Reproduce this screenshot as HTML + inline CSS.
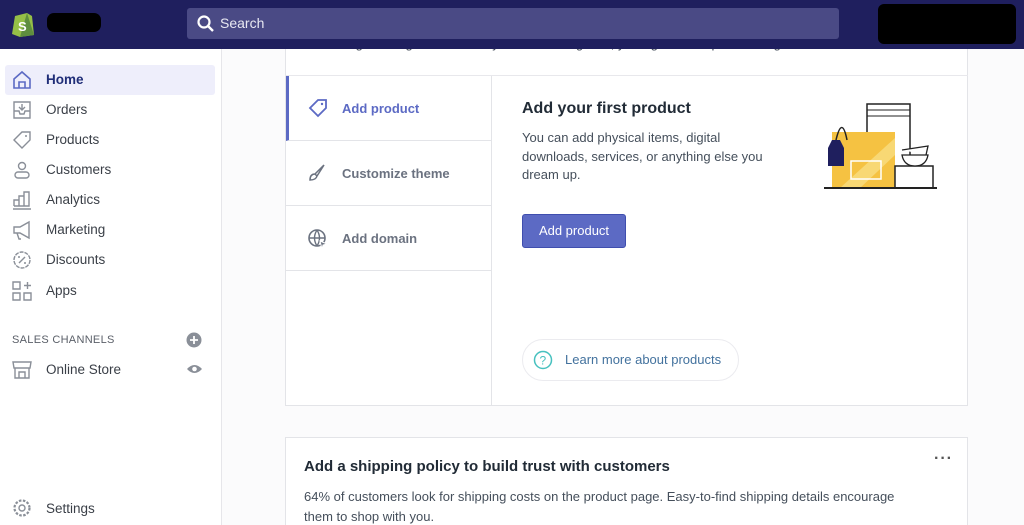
<!DOCTYPE html>
<html><head><style>
*{box-sizing:border-box;margin:0;padding:0}
html,body{width:1024px;height:525px;overflow:hidden}
body{font-family:"Liberation Sans",sans-serif;background:#fbfbfc;position:relative;color:#212b36}
.top{position:absolute;left:0;top:0;width:1024px;height:49px;background:#1f1f5e;z-index:5}
.search{position:absolute;left:187px;top:8px;width:652px;height:31px;background:#4a4a85;border-radius:3px;color:#e8e8f2;font-size:14px;line-height:31px;padding-left:54px}
.side{position:absolute;left:0;top:49px;width:222px;height:476px;background:#fff;border-right:1px solid #e6e6ea}
.item{position:absolute;left:46px;font-size:13.5px;color:#3a3f47}
.ic{position:absolute;left:11px;width:22px;height:22px}
.card{position:absolute;background:#fff;border:1px solid #e3e4e8}
.tab{position:absolute;left:286px;width:206px;height:65px;border-bottom:1px solid #e3e4e8;font-size:13px;font-weight:bold;color:#6b7280;padding-left:56px;line-height:65px}
</style></head><body>
<div class="top">
<svg style="position:absolute;left:11px;top:10px" width="24" height="27" viewBox="0 0 24 27"><path d="M4 6 L16 3 L21 6 L23 25 L9 27 L1 24 Z" fill="#95bf47"/><path d="M16 3 L23 25 L9 27 Z" fill="#5e8e3e"/><text x="7" y="21" font-size="13" font-weight="bold" fill="#fff" font-family="Liberation Sans">S</text></svg>
<div style="position:absolute;left:47px;top:13px;width:54px;height:19px;background:#000;border-radius:7px"></div>
<div class="search"><svg style="position:absolute;left:10px;top:7px" width="18" height="18" viewBox="0 0 18 18"><circle cx="7" cy="7" r="5.5" stroke="#fff" stroke-width="2.2" fill="none"/><path d="M11 11 L16 16" stroke="#fff" stroke-width="2.4"/></svg><span style="position:absolute;left:33px">Search</span></div>
<div style="position:absolute;left:878px;top:4px;width:138px;height:40px;background:#000;border-radius:6px"></div>
</div>
<div class="side">
<div style="position:absolute;left:5px;top:16px;width:210px;height:30px;background:#eeeefb;border-radius:3px"></div>
<svg class="ic" style="top:20px" viewBox="0 0 22 22"><path d="M3 10 L11 3 L19 10 V19 H3 Z M8 19 V13 H14 V19" stroke="#5c6ac4" stroke-width="1.6" fill="none"/></svg>
<div class="item" style="top:23px;color:#202e78;font-weight:bold">Home</div>
<svg class="ic" style="top:50px" viewBox="0 0 22 22"><path d="M3 3 H19 V19 H3 Z M3 12 H8 L9 15 H13 L14 12 H19 M11 5 V11 M8 8 L11 11 L14 8" stroke="#8a8f98" stroke-width="1.4" fill="none"/></svg>
<div class="item" style="top:53px">Orders</div>
<svg class="ic" style="top:80px" viewBox="0 0 22 22"><path d="M3 11 L11 3 H19 V11 L11 19 Z" stroke="#8a8f98" stroke-width="1.4" fill="none"/><circle cx="15" cy="7" r="1" fill="#8a8f98"/></svg>
<div class="item" style="top:83px">Products</div>
<svg class="ic" style="top:110px" viewBox="0 0 22 22"><circle cx="11" cy="7" r="3.5" stroke="#8a8f98" stroke-width="1.4" fill="none"/><rect x="4" y="13" width="14" height="6" rx="3" stroke="#8a8f98" stroke-width="1.4" fill="none"/></svg>
<div class="item" style="top:113px">Customers</div>
<svg class="ic" style="top:140px" viewBox="0 0 22 22"><path d="M2 20 H20 M3 17 V11 H8 V17 M8 17 V7 H13 V17 M13 17 V3 H18 V17 H3" stroke="#8a8f98" stroke-width="1.4" fill="none"/></svg>
<div class="item" style="top:143px">Analytics</div>
<svg class="ic" style="top:170px" viewBox="0 0 22 22"><path d="M3 8 H9 L18 3 V19 L9 14 H3 Z M6 14 L8 20 H10" stroke="#8a8f98" stroke-width="1.4" fill="none"/></svg>
<div class="item" style="top:173px">Marketing</div>
<svg class="ic" style="top:200px" viewBox="0 0 22 22"><circle cx="11" cy="11" r="8" stroke="#8a8f98" stroke-width="1.4" fill="none" stroke-dasharray="4 1"/><path d="M8 14 L14 8" stroke="#8a8f98" stroke-width="1.4"/><circle cx="8" cy="8" r="1" fill="#8a8f98"/><circle cx="14" cy="14" r="1" fill="#8a8f98"/></svg>
<div class="item" style="top:203px">Discounts</div>
<svg class="ic" style="top:231px" viewBox="0 0 22 22"><path d="M2 2 H9 V9 H2 Z M2 13 H9 V20 H2 Z M13 13 H20 V20 H13 Z M16.5 2 V9 M13 5.5 H20" stroke="#8a8f98" stroke-width="1.4" fill="none"/></svg>
<div class="item" style="top:234px">Apps</div>
<div style="position:absolute;left:12px;top:285px;font-size:11px;color:#5a5f68;letter-spacing:.3px">SALES CHANNELS</div>
<svg style="position:absolute;left:186px;top:283px" width="16" height="16" viewBox="0 0 16 16"><circle cx="8" cy="8" r="7.5" fill="#8a8f98"/><path d="M8 4 V12 M4 8 H12" stroke="#fff" stroke-width="1.8"/></svg>
<svg class="ic" style="top:310px" viewBox="0 0 22 22"><path d="M2 3 H20 L19 9 H3 Z M4 9 V19 H18 V9 M8 19 V13 H14 V19" stroke="#8a8f98" stroke-width="1.4" fill="none"/></svg>
<div class="item" style="top:313px">Online Store</div>
<svg style="position:absolute;left:186px;top:314px" width="17" height="12" viewBox="0 0 17 12"><path d="M1 6 Q8.5 -2 16 6 Q8.5 14 1 6Z" fill="#8a8f98"/><circle cx="8.5" cy="6" r="2.3" fill="#fff"/></svg>
<svg class="ic" style="top:448px" viewBox="0 0 22 22"><circle cx="11" cy="11" r="3" stroke="#8a8f98" stroke-width="1.4" fill="none"/><circle cx="11" cy="11" r="7.5" stroke="#8a8f98" stroke-width="2.2" fill="none" stroke-dasharray="2.5 1.5"/></svg>
<div class="item" style="top:452px">Settings</div>
</div>
<div class="card" style="left:285px;top:20px;width:683px;height:386px"></div>
<div style="position:absolute;left:304px;top:36px;font-size:13px;color:#454f5b">Here's a guide to get started. As your business grows, you'll get fresh tips and insights here.</div>
<div style="position:absolute;left:285px;top:75px;width:683px;height:1px;background:#e8e8ec"></div>
<div style="position:absolute;left:491px;top:76px;width:1px;height:330px;background:#e3e4e8"></div>
<div class="tab" style="top:76px;color:#5c6ac4;border-left:3px solid #5c6ac4;padding-left:53px">Add product</div>
<svg style="position:absolute;left:307px;top:97px" width="22" height="22" viewBox="0 0 22 22"><path d="M3 11 L11 3 H19 V11 L11 19 Z" stroke="#5c6ac4" stroke-width="1.8" fill="none"/><circle cx="15" cy="7" r="1.2" fill="#5c6ac4"/></svg>
<div class="tab" style="top:141px">Customize theme</div>
<svg style="position:absolute;left:307px;top:163px" width="20" height="20" viewBox="0 0 20 20"><path d="M17 2 L8 11 L10 13 Z M8 11 Q3 11 3 17 Q9 17 10 13" stroke="#6b7280" stroke-width="1.5" fill="none"/></svg>
<div class="tab" style="top:206px">Add domain</div>
<svg style="position:absolute;left:307px;top:228px" width="22" height="22" viewBox="0 0 22 22"><circle cx="10" cy="10" r="8" stroke="#6b7280" stroke-width="1.6" fill="none"/><path d="M2 10 H18 M10 2 Q5 10 10 18 M10 2 Q15 10 10 18" stroke="#6b7280" stroke-width="1.4" fill="none"/><path d="M13 13 L20 16 L16 17 L15 21 Z" fill="#6b7280" stroke="#fff"/></svg>
<div style="position:absolute;left:522px;top:100px;font-size:16px;font-weight:bold;color:#212b36">Add your first product</div>
<div style="position:absolute;left:522px;top:129px;width:260px;font-size:13px;line-height:18.5px;color:#454f5b">You can add physical items, digital downloads, services, or anything else you dream up.</div>
<div style="position:absolute;left:522px;top:214px;width:104px;height:34px;background:#5c6ac4;border:1px solid #3f4eae;border-radius:3px;color:#fff;font-size:13px;line-height:32px;text-align:center">Add product</div>
<div style="position:absolute;left:522px;top:339px;width:217px;height:42px;border:1px solid #ebebef;border-radius:21px;font-size:13px;color:#43729e;line-height:40px;padding-left:42px">Learn more about products</div>
<svg style="position:absolute;left:533px;top:350px" width="20" height="20" viewBox="0 0 20 20"><circle cx="10" cy="10" r="8.5" stroke="#47c1bf" stroke-width="1.5" fill="none"/><text x="6.5" y="14.5" font-size="12" fill="#47c1bf" font-family="Liberation Sans">?</text></svg>
<svg style="position:absolute;left:820px;top:100px" width="120" height="92" viewBox="0 0 120 92"><path d="M47 4 H90 V70 H47 Z" fill="#fff" stroke="#222" stroke-width="1.5"/><path d="M47 10 H90 M47 16 H90" stroke="#222"/><rect x="12" y="32" width="63" height="56" fill="#f5c242"/><path d="M20 88 L75 38 V55 L40 88Z" fill="#f8d874"/><rect x="31" y="61" width="30" height="18" fill="none" stroke="#fff" stroke-width="1.5"/><rect x="75" y="66" width="38" height="22" fill="#fff" stroke="#222" stroke-width="1.5"/><path d="M82 55 H108 Q106 66 95 66 Q84 66 82 55Z M82 50 L108 46 L106 55" fill="#fff" stroke="#222" stroke-width="1.3"/><path d="M16 40 Q22 15 27 40" stroke="#222" fill="none" stroke-width="1.5"/><path d="M8 48 L12 40 H20 L24 48 V66 H8 Z" fill="#1f1f5e"/><path d="M4 88 H117" stroke="#222" stroke-width="2"/></svg>
<div class="card" style="left:285px;top:437px;width:683px;height:100px"></div>
<div style="position:absolute;left:304px;top:458px;font-size:15px;font-weight:bold;color:#212b36">Add a shipping policy to build trust with customers</div>
<div style="position:absolute;left:934px;top:450px;font-size:16px;color:#555;letter-spacing:1px;font-weight:bold">···</div>
<div style="position:absolute;left:304px;top:487px;width:620px;font-size:13px;line-height:20px;color:#454f5b">64% of customers look for shipping costs on the product page. Easy-to-find shipping details encourage them to shop with you.</div>
</body></html>
